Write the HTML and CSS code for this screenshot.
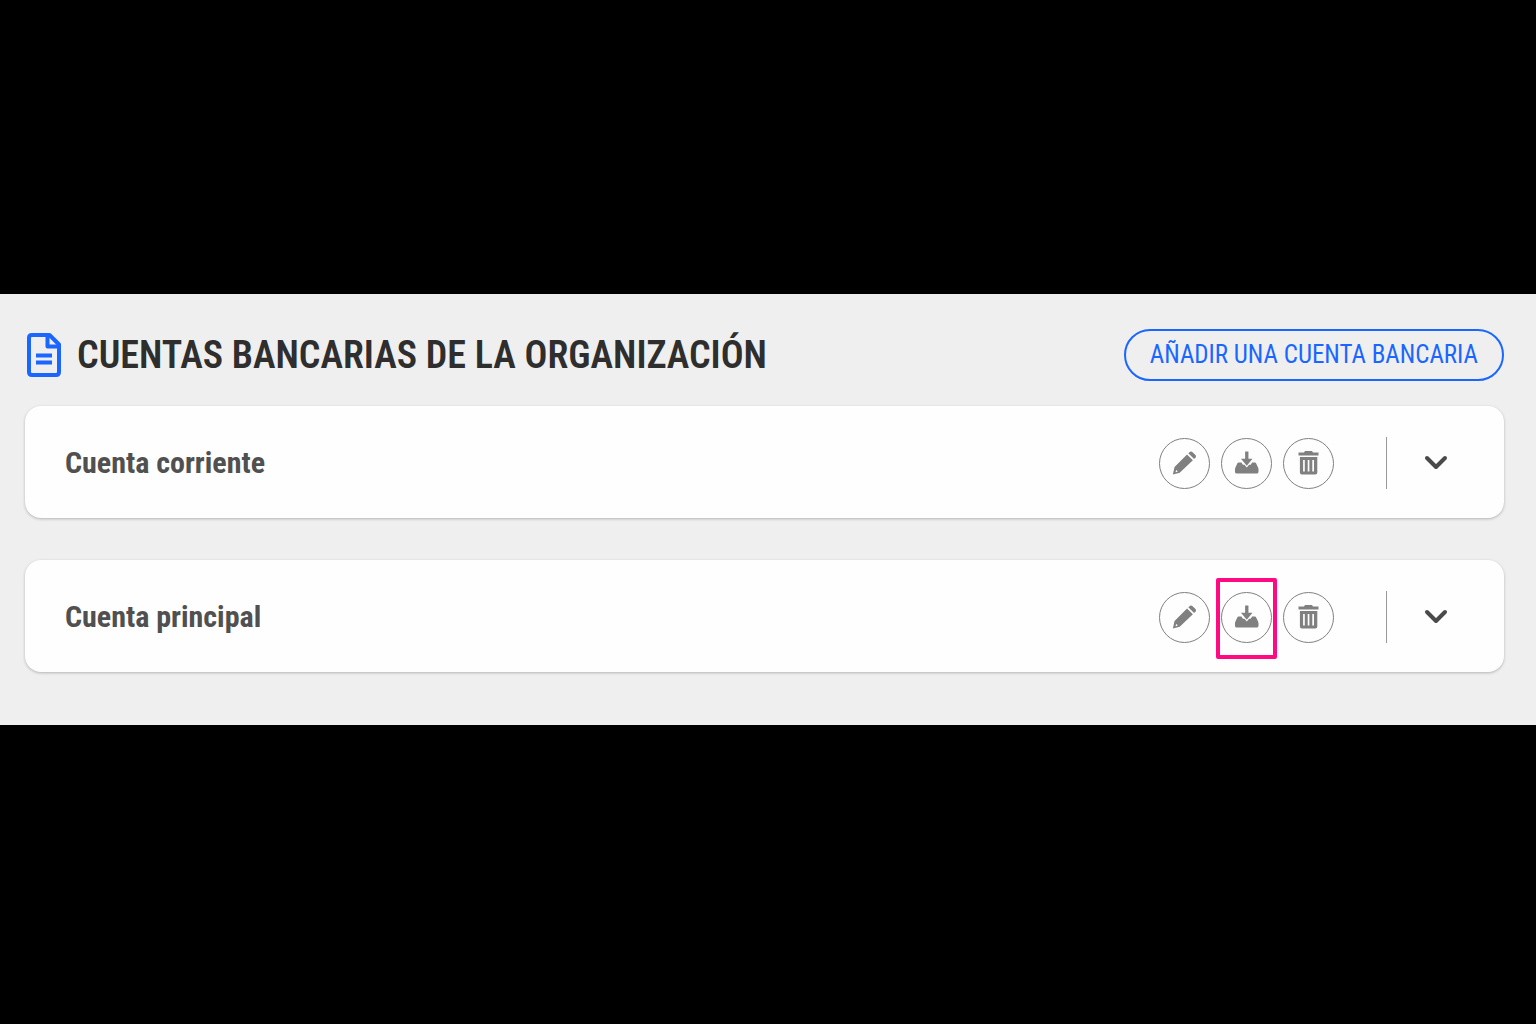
FILE: index.html
```html
<!DOCTYPE html>
<html lang="es">
<head>
  <meta charset="UTF-8" />
  <meta name="viewport" content="width=device-width, initial-scale=1.0"/>
  <title>Cuentas bancarias de la organización</title>
  <link rel="stylesheet" href="styles.css">
</head>
<body>

<!-- Shared icons -->
<svg class="sprite" aria-hidden="true">
  <symbol id="icon-edit" viewBox="0 0 24 24">
    <path fill-rule="evenodd" d="M14.5 3.4 20.400 9.3 7.200 21.8 0.4 23.6 2 16ZM3.600 19.2 3 21.3 5 20.800 4.8 19.400Z"/>
    <path d="M15.800 2.300 17.600 0.8Q18.8 0 19.8 0.9L23 4.1Q24 5.2 23.2 6.2L21.600 8Z"/>
  </symbol>
  <symbol id="icon-download" viewBox="0 0 26 26">
    <path d="M11.500 0.500h3.600v8h4.400L13.300 16 7 8.500h4.500z"/>
    <path d="M4.500 12.500h3l1.600 2.400h1.700l2.500 3 2.500-3h1.700l1.600-2.400h3q1 0 1.400 1l2 4.500q.5 1 .5 2v2.500q0 2-2 2H2.500q-2 0-2-2V20q0-1 .5-2l2-4.500q.5-1 1.500-1z"/>
  </symbol>
  <symbol id="icon-trash" viewBox="0 0 22 24">
    <path d="M1 1.500h5.500L7.500 0h7l1 1.500H21v3H1z"/>
    <path fill-rule="evenodd" d="M2.400 6h17.400v15.500q0 2-2 2H4.400q-2 0-2-2zM5.600 9v11.500h1.700V9zM10.200 9v11.500h1.700V9zM14.800 9v11.500h1.700V9z"/>
  </symbol>
  <symbol id="icon-chevron" viewBox="0 0 24 16">
    <path d="M3 3l9 9 9-9" fill="none" stroke="currentColor" stroke-width="4" stroke-linecap="round" stroke-linejoin="round"/>
  </symbol>
</svg>

<main class="panel">
  <header class="panel-header">
    <svg class="doc-icon" viewBox="0 0 34 44" aria-hidden="true">
      <path d="M5 2h17.500L32 11.500V39q0 3-3 3H5q-3 0-3-3V5q0-3 3-3z"/>
      <path d="M20.500 2v11.500H32"/>
      <path d="M9 22.500h16M9 29.500h16"/>
    </svg>
    <h1>CUENTAS BANCARIAS DE LA ORGANIZACIÓN</h1>
    <button type="button" class="add-btn">AÑADIR UNA CUENTA BANCARIA</button>
  </header>

  <section class="accounts">
    <article class="account">
      <h2>Cuenta corriente</h2>
      <div class="actions">
        <button type="button" class="icon-btn" aria-label="Editar"><svg><use href="#icon-edit"/></svg></button>
        <button type="button" class="icon-btn" aria-label="Descargar"><svg><use href="#icon-download"/></svg></button>
        <button type="button" class="icon-btn" aria-label="Eliminar"><svg><use href="#icon-trash"/></svg></button>
      </div>
      <div class="expand">
        <button type="button" class="expand-btn" aria-label="Desplegar"><svg><use href="#icon-chevron"/></svg></button>
      </div>
    </article>

    <article class="account">
      <h2>Cuenta principal</h2>
      <div class="actions">
        <button type="button" class="icon-btn" aria-label="Editar"><svg><use href="#icon-edit"/></svg></button>
        <button type="button" class="icon-btn highlight" aria-label="Descargar"><svg><use href="#icon-download"/></svg></button>
        <button type="button" class="icon-btn" aria-label="Eliminar"><svg><use href="#icon-trash"/></svg></button>
      </div>
      <div class="expand">
        <button type="button" class="expand-btn" aria-label="Desplegar"><svg><use href="#icon-chevron"/></svg></button>
      </div>
    </article>
  </section>
</main>

</body>
</html>
```
FILE: styles.css
```css
:root {
  --bg: #efefef;
  --accent: #1a66ff;
  --title: #2e2e2e;
  --text: #505050;
  --icon: #808080;
  --mark: #ff0a82;
}
*, *::after {
  box-sizing: border-box;
}
body {
  margin: 0;
  min-height: 100vh;
  padding-bottom: 5px;
  display: flex;
  flex-direction: column;
  justify-content: center;
  background: #000;
  color: var(--text);
  font-family: "Roboto Condensed", Roboto, "Liberation Sans", sans-serif;
}
.sprite {
  display: none;
}
h1, h2 {
  margin: 0;
  font-weight: bold;
}
button {
  font-family: inherit;
  background: transparent;
  cursor: pointer;
}
.panel {
  background: var(--bg);
  padding: 35px 32px 53px 25px;
}
.panel-header {
  display: flex;
  align-items: center;
  margin-bottom: 25px;
  padding-left: 2px;
}
.doc-icon {
  width: 34px;
  height: 44px;
  margin-right: 16px;
  flex-shrink: 0;
  fill: none;
  stroke: var(--accent);
  stroke-width: 4;
  stroke-linejoin: round;
}
h1 {
  flex: 1;
  font-size: 38px;
  font-weight: 600;
  line-height: 44px;
  color: var(--title);
}
.add-btn {
  height: 52px;
  padding: 0 24px;
  border: 2px solid var(--accent);
  border-radius: 26px;
  color: var(--accent);
  font-size: 25px;
  line-height: 28px;
  white-space: nowrap;
}
.accounts {
  display: flex;
  flex-direction: column;
  gap: 42px;
}
.account {
  display: flex;
  align-items: center;
  min-height: 112px;
  padding: 2px 48px 0 40px;
  background: #fefefe;
  border-radius: 16px;
  box-shadow: 0 1px 3px rgba(0, 0, 0, 0.25);
}
h2 {
  flex: 1;
  font-size: 30px;
  line-height: 36px;
}
.actions {
  display: flex;
  gap: 11px;
  margin-right: 52px;
}
.icon-btn {
  position: relative;
  display: flex;
  align-items: center;
  justify-content: center;
  width: 51px;
  height: 51px;
  padding: 0;
  border: 1px solid var(--icon);
  border-radius: 50%;
}
.icon-btn svg {
  width: 25px;
  height: 24px;
  fill: var(--icon);
}
.highlight::after {
  content: "";
  position: absolute;
  top: -15px;
  left: -6px;
  width: 61px;
  height: 81px;
  border: 4px solid var(--mark);
  border-radius: 2px;
}
.expand {
  display: flex;
  align-items: center;
  height: 52px;
  padding-left: 29px;
  border-left: 1px solid #999;
}
.expand-btn {
  display: flex;
  justify-content: center;
  width: 40px;
  padding: 0;
  border: 0;
  color: #4a4a4a;
}
.expand-btn svg {
  width: 24px;
  height: 16px;
}
```
